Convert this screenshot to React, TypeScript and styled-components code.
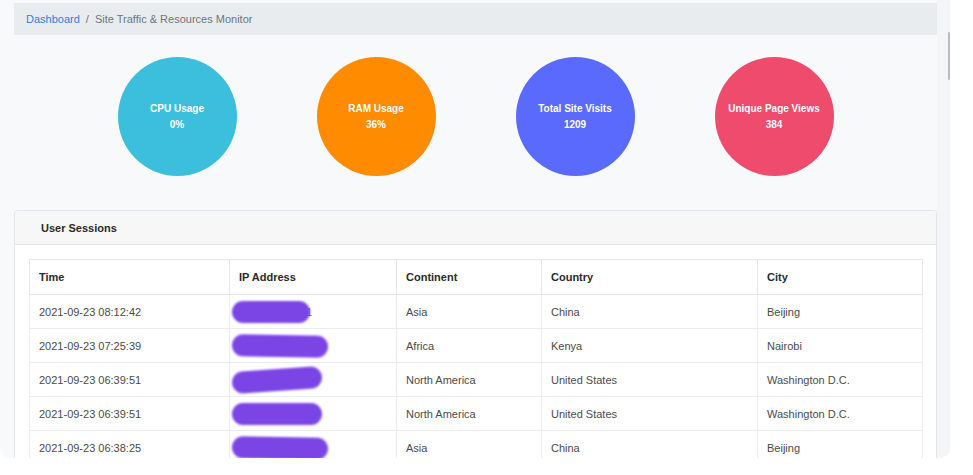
import styled, { createGlobalStyle } from "styled-components";

const Stats = [
  { label: "CPU Usage", value: "0%", color: "#3bbfdc" },
  { label: "RAM Usage", value: "36%", color: "#ff8b00" },
  { label: "Total Site Visits", value: "1209", color: "#5a6afd" },
  { label: "Unique Page Views", value: "384", color: "#ef4b6d" },
];

const Sessions = [
  { time: "2021-09-23 08:12:42", blur: 78, tilt: 0, tail: "1", continent: "Asia", country: "China", city: "Beijing" },
  { time: "2021-09-23 07:25:39", blur: 96, tilt: 1, tail: "", continent: "Africa", country: "Kenya", city: "Nairobi" },
  { time: "2021-09-23 06:39:51", blur: 90, tilt: -4, tail: "", continent: "North America", country: "United States", city: "Washington D.C." },
  { time: "2021-09-23 06:39:51", blur: 90, tilt: 0, tail: "", continent: "North America", country: "United States", city: "Washington D.C." },
  { time: "2021-09-23 06:38:25", blur: 96, tilt: 1, tail: "", continent: "Asia", country: "China", city: "Beijing" },
];

const Columns = [
  { label: "Time", width: 200 },
  { label: "IP Address", width: 167 },
  { label: "Continent", width: 145 },
  { label: "Country", width: 216 },
  { label: "City", width: 165 },
];

const App = () => {
  return (
    <>
      <GlobalStyle />
      <Frame>
        <Content>
          <Breadcrumb>
            <BreadLink>Dashboard</BreadLink>
            <BreadSep>/</BreadSep>
            <BreadActive>Site Traffic &amp; Resources Monitor</BreadActive>
          </Breadcrumb>
          <StatRow>
            {Stats.map((el) => (
              <StatSlot key={el.label}>
                <Circle $color={el.color}>
                  <span>{el.label}</span>
                  <span>{el.value}</span>
                </Circle>
              </StatSlot>
            ))}
          </StatRow>
          <Card>
            <CardHeader>User Sessions</CardHeader>
            <CardBody>
              <Table>
                <colgroup>
                  {Columns.map((c) => (
                    <col key={c.label} style={{ width: c.width }} />
                  ))}
                </colgroup>
                <thead>
                  <tr>
                    {Columns.map((c) => (
                      <Th key={c.label}>{c.label}</Th>
                    ))}
                  </tr>
                </thead>
                <tbody>
                  {Sessions.map((s, idx) => (
                    <tr key={idx}>
                      <Td>{s.time}</Td>
                      <Td>
                        <IpCell>
                          <Redacted $width={s.blur} $tilt={s.tilt} />
                          {s.tail && <Tail>{s.tail}</Tail>}
                        </IpCell>
                      </Td>
                      <Td>{s.continent}</Td>
                      <Td>{s.country}</Td>
                      <Td>{s.city}</Td>
                    </tr>
                  ))}
                </tbody>
              </Table>
            </CardBody>
          </Card>
        </Content>
        <Track>
          <Thumb />
        </Track>
      </Frame>
    </>
  );
};

export default App;

const GlobalStyle = createGlobalStyle`
  * { box-sizing: border-box; }
  body {
    margin: 0;
    background: #fff;
    font-family: "Liberation Sans", Arial, sans-serif;
  }
`;

const Frame = styled.div`
  width: 950px;
  height: 458px;
  display: flex;
  background: #f8f9fa;
  border-radius: 0 0 10px 10px;
  overflow: hidden;
`;

const Content = styled.div`
  flex: 1;
  padding: 3px 0 0 14px;
`;

const Track = styled.div`
  width: 13px;
  background: #f4f5f7;
  padding-top: 32px;
  display: flex;
  justify-content: flex-end;
`;

const Thumb = styled.div`
  width: 2px;
  height: 48px;
  background: #b9bcc0;
  border-radius: 1px;
`;

const Breadcrumb = styled.div`
  height: 32px;
  display: flex;
  align-items: center;
  padding: 0 12px;
  background: #e9ecef;
  font-size: 11px;
`;

const BreadLink = styled.span`
  color: #2f7fd8;
`;

const BreadSep = styled.span`
  color: #6c757d;
  padding: 0 6px;
`;

const BreadActive = styled.span`
  color: #6c757d;
`;

const StatRow = styled.div`
  display: flex;
  justify-content: center;
  margin: 22px 0 34px;
`;

const StatSlot = styled.div`
  width: 199px;
  display: flex;
  justify-content: center;
`;

const Circle = styled.div<{ $color: string }>`
  width: 119px;
  height: 119px;
  border-radius: 50%;
  background: ${(p) => p.$color};
  display: flex;
  flex-direction: column;
  align-items: center;
  justify-content: center;
  color: #fff;
  font-size: 10px;
  font-weight: 700;
  line-height: 16px;
`;

const Card = styled.div`
  width: 923px;
  background: #fff;
  border: 1px solid #e3e5e8;
  border-radius: 4px;
`;

const CardHeader = styled.div`
  height: 34px;
  display: flex;
  align-items: center;
  padding: 0 26px;
  background: #f7f7f7;
  border-bottom: 1px solid #e3e3e3;
  border-radius: 4px 4px 0 0;
  color: #2a2a2a;
  font-size: 11px;
  font-weight: 700;
`;

const CardBody = styled.div`
  padding: 14px 14px 0;
`;

const Table = styled.table`
  width: 893px;
  table-layout: fixed;
  border-collapse: collapse;
  font-size: 11px;
`;

const Th = styled.th`
  height: 35px;
  padding: 0 9px;
  text-align: left;
  color: #2a2a2a;
  font-weight: 700;
  border: 1px solid #e6e6e6;
`;

const Td = styled.td`
  height: 34px;
  padding: 0 9px;
  color: #4a4a4a;
  border: 1px solid #ececec;
  white-space: nowrap;
`;

const IpCell = styled.div`
  display: flex;
  align-items: center;
  margin-left: -7px;
`;

const Redacted = styled.span<{ $width: number; $tilt: number }>`
  display: block;
  width: ${(p) => p.$width}px;
  height: 22px;
  border-radius: 11px;
  background: #7b45e6;
  filter: blur(1.2px);
  transform: rotate(${(p) => p.$tilt}deg);
`;

const Tail = styled.span`
  margin-left: -4px;
  color: #666;
`;
